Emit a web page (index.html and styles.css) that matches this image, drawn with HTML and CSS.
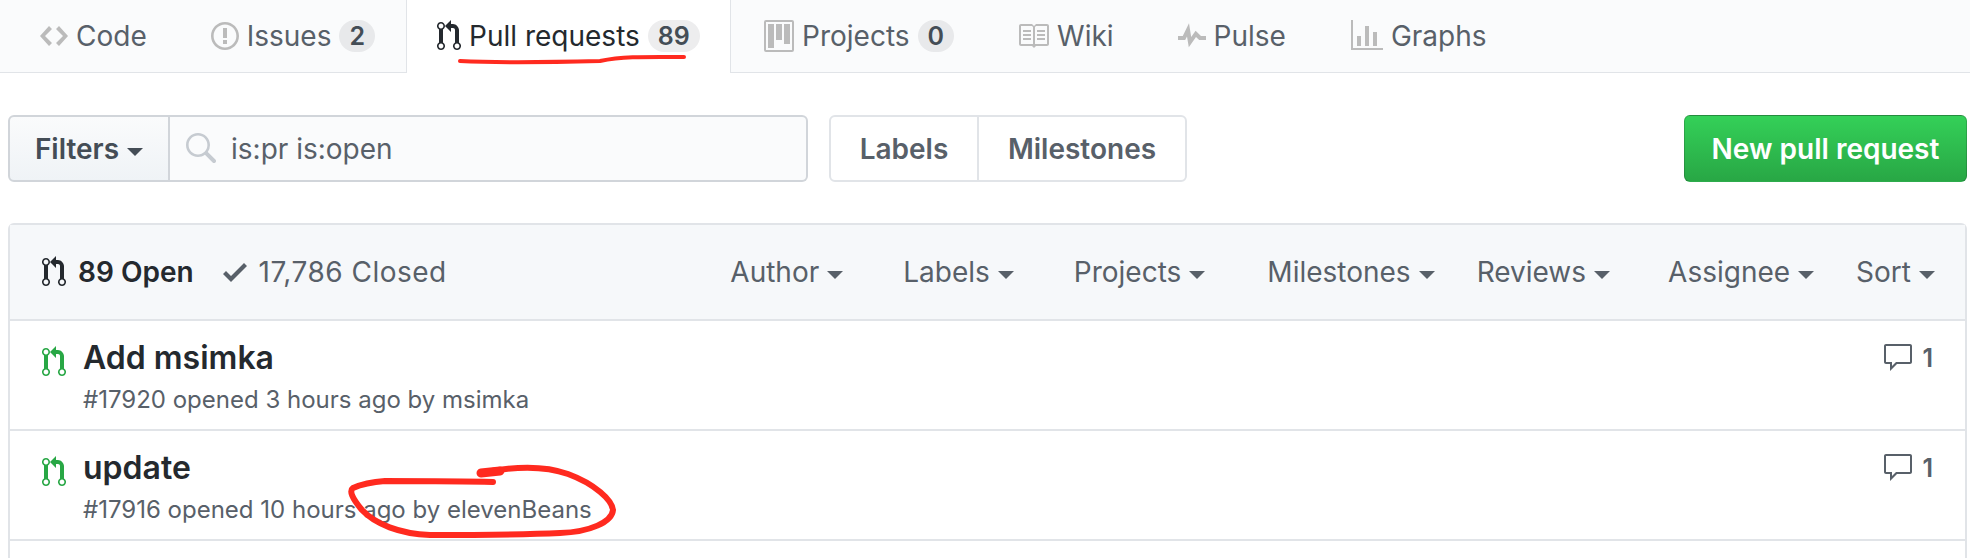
FILE: index.html
```html
<!DOCTYPE html>
<html lang="en">
<head>
    <meta charset="UTF-8">
    <meta name="viewport" content="width=device-width, initial-scale=1.0">
    <title>Pull requests</title>
    <link rel="stylesheet" href="styles.css">
</head>
<body>
    <svg class="icon-defs" width="0" height="0">
        <symbol id="i-code" viewBox="0 0 14 16"><path d="M9.5 3L8 4.5 11.5 8 8 11.5 9.5 13 14 8 9.5 3zm-5 0L0 8l4.5 5L6 11.5 2.5 8 6 4.5 4.5 3z"/></symbol>
        <symbol id="i-issue" viewBox="0 0 14 16"><path d="M7 2.3c3.14 0 5.7 2.56 5.7 5.7s-2.56 5.7-5.7 5.7A5.71 5.71 0 0 1 1.3 8c0-3.14 2.56-5.7 5.7-5.7zM7 1C3.14 1 0 4.14 0 8s3.14 7 7 7 7-3.14 7-7-3.14-7-7-7zm1 3H6v5h2V4zm0 6H6v2h2v-2z"/></symbol>
        <symbol id="i-pr" viewBox="0 0 12 16"><path d="M11 11.28V5c-.03-.78-.34-1.47-.94-2.06C9.46 2.35 8.78 2.03 8 2H7V0L4 3l3 3V4h1c.27.02.48.11.69.31.21.2.3.42.31.69v6.28A1.993 1.993 0 0 0 10 15a1.993 1.993 0 0 0 1-3.72zm-1 2.92c-.66 0-1.2-.55-1.2-1.2 0-.65.55-1.2 1.2-1.2.65 0 1.2.55 1.2 1.2 0 .65-.55 1.2-1.2 1.2zM4 3c0-1.11-.89-2-2-2a1.993 1.993 0 0 0-1 3.72v6.56A1.993 1.993 0 0 0 2 15a1.993 1.993 0 0 0 1-3.72V4.72c.59-.34 1-.98 1-1.72zm-.8 10c0 .66-.55 1.2-1.2 1.2-.65 0-1.2-.55-1.2-1.2 0-.65.55-1.2 1.2-1.2.65 0 1.2.55 1.2 1.2zM2 4.2C1.34 4.2.8 3.65.8 3c0-.65.55-1.2 1.2-1.2.65 0 1.2.55 1.2 1.2 0 .65-.55 1.2-1.2 1.2z"/></symbol>
        <symbol id="i-project" viewBox="0 0 15 16"><path d="M10 12h3V2h-3v10zm-4-2h3V2H6v8zm-4 4h3V2H2v12zm-1 1h13V1H1v14zM14 0H1a1 1 0 0 0-1 1v14a1 1 0 0 0 1 1h13a1 1 0 0 0 1-1V1a1 1 0 0 0-1-1z"/></symbol>
        <symbol id="i-book" viewBox="0 0 16 16"><path d="M3 5h4v1H3V5zm0 3h4V7H3v1zm0 2h4V9H3v1zm11-5h-4v1h4V5zm0 2h-4v1h4V7zm0 2h-4v1h4V9zm2-6v9c0 .55-.45 1-1 1H9.5l-1 1-1-1H2c-.55 0-1-.45-1-1V3c0-.55.45-1 1-1h5.5l1 1 1-1H15c.55 0 1 .45 1 1zm-8 .5L7.5 3H2v9h6V3.5zm7-.5H9.5l-.5.5V12h6V3z"/></symbol>
        <symbol id="i-pulse" viewBox="0 0 14 16"><path d="M11.5 8L8.8 5.4 6.6 8.5 5.5 1.6 2.38 8H0v2h3.6l.9-1.8.9 5.4L9 8.5l1.6 1.5H14V8z"/></symbol>
        <symbol id="i-graph" viewBox="0 0 16 16"><path d="M16 14v1H0V0h1v14h15zM5 13H3V8h2v5zm4 0H7V3h2v10zm4 0h-2V6h2v7z"/></symbol>
        <symbol id="i-check" viewBox="0 0 12 16"><path d="M12 5l-8 8-4-4 1.5-1.5L4 10l6.5-6.5L12 5z"/></symbol>
        <symbol id="i-comment" viewBox="0 0 16 16"><path d="M14 1H2c-.55 0-1 .45-1 1v8c0 .55.45 1 1 1h2v3.5L7.5 11H14c.55 0 1-.45 1-1V2c0-.55-.45-1-1-1zm0 9H7l-2 2v-2H2V2h12v8z"/></symbol>
        <symbol id="i-search" viewBox="0 0 16 16"><path d="M15.7 13.3l-3.81-3.83A5.93 5.93 0 0 0 13 6c0-3.31-2.69-6-6-6S1 2.69 1 6s2.69 6 6 6c1.3 0 2.48-.41 3.47-1.11l3.83 3.81c.19.2.45.3.7.3.25 0 .52-.09.7-.3a.996.996 0 0 0 0-1.41v.01zM7 10.7c-2.59 0-4.7-2.11-4.7-4.7 0-2.59 2.11-4.7 4.7-4.7 2.59 0 4.7 2.11 4.7 4.7 0 2.59-2.11 4.7-4.7 4.7z"/></symbol>
    </svg>

    <!-- Repo tabs -->
    <nav class="tabs">
        <a class="tab tab-code"><svg class="tab-icon w-code"><use href="#i-code"/></svg>Code</a>
        <a class="tab tab-issues"><svg class="tab-icon w-issue"><use href="#i-issue"/></svg>Issues<span class="counter">2</span></a>
        <a class="tab tab-selected"><svg class="tab-icon w-pr"><use href="#i-pr"/></svg>Pull requests<span class="counter">89</span></a>
        <a class="tab tab-projects"><svg class="tab-icon w-project"><use href="#i-project"/></svg>Projects<span class="counter">0</span></a>
        <a class="tab tab-wiki"><svg class="tab-icon w-book"><use href="#i-book"/></svg>Wiki</a>
        <a class="tab tab-pulse"><svg class="tab-icon w-pulse"><use href="#i-pulse"/></svg>Pulse</a>
        <a class="tab tab-graphs"><svg class="tab-icon w-graph"><use href="#i-graph"/></svg>Graphs</a>
    </nav>

    <!-- Filters row -->
    <div class="toolbar">
        <button class="filters-btn">Filters<span class="caret"></span></button>
        <div class="search-box">
            <svg class="search-icon"><use href="#i-search"/></svg>
            <span>is:pr is:open</span>
        </div>
        <div class="link-group">
            <a class="link-labels">Labels</a>
            <a class="link-milestones">Milestones</a>
        </div>
        <button class="new-pr">New pull request</button>
    </div>

    <!-- Issue list -->
    <div class="list">
        <div class="list-header">
            <div class="states">
                <span class="state-open"><svg class="w-pr"><use href="#i-pr"/></svg>89 Open</span>
                <span class="state-closed"><svg class="w-check"><use href="#i-check"/></svg>17,786 Closed</span>
            </div>
            <div class="menus">
                <span class="menu">Author<span class="caret"></span></span>
                <span class="menu m-labels">Labels<span class="caret"></span></span>
                <span class="menu m-projects">Projects<span class="caret"></span></span>
                <span class="menu m-milestones">Milestones<span class="caret"></span></span>
                <span class="menu m-reviews">Reviews<span class="caret"></span></span>
                <span class="menu m-assignee">Assignee<span class="caret"></span></span>
                <span class="menu m-sort">Sort<span class="caret"></span></span>
            </div>
        </div>

        <div class="row">
            <svg class="row-icon w-pr"><use href="#i-pr"/></svg>
            <div class="row-main">
                <div class="row-title">Add msimka</div>
                <div class="row-meta">#17920 opened 3 hours ago by msimka</div>
            </div>
            <div class="row-comments"><svg><use href="#i-comment"/></svg>1</div>
        </div>

        <div class="row">
            <svg class="row-icon w-pr"><use href="#i-pr"/></svg>
            <div class="row-main">
                <div class="row-title">update</div>
                <div class="row-meta">#17916 opened 10 hours ago by elevenBeans</div>
            </div>
            <div class="row-comments"><svg><use href="#i-comment"/></svg>1</div>
        </div>

        <div class="row row-cut"></div>
    </div>

    <!-- Red pen marks on top of the screenshot -->
    <svg class="pen-marks" width="1970" height="558">
        <path class="pen-thin" d="M460 61 C500 63 560 62 600 61 C625 56 650 57 684 57"/>
        <path class="pen-thick" d="M481 473 C505 468 540 464 568 474 C595 484 612 500 613 510 C612 522 590 532 560 533 C520 535 470 535 430 535 C400 534 375 524 362 510 C352 498 349 491 353 488 C362 484 372 482 385 481 C420 481 460 481 493 482"/>
        <path class="pen-blob" d="M481 473 L500 471"/>
    </svg>
</body>
</html>
```

FILE: styles.css
```css
:root {
    --border-color: #e1e4e8;
    --text-color: #24292e;
    --muted-color: #586069;
    --icon-color: #bbb;
    --open-color: #28a745;
    --pen-color: #ff2a1f;
}

body {
    margin: 0;
    height: 558px;
    overflow: hidden;
    font-family: Inter, "Liberation Sans", sans-serif;
    background-color: #fff;
    color: var(--text-color);
}

svg {
    fill: currentColor;
    fill-rule: evenodd;
    flex: none;
}

.icon-defs {
    position: absolute;
}

/* octicons at 2x */
.w-code { width: 28px; height: 32px; }
.w-issue { width: 28px; height: 32px; }
.w-pr { width: 24px; height: 32px; }
.w-project { width: 30px; height: 32px; }
.w-book { width: 32px; height: 32px; }
.w-pulse { width: 28px; height: 32px; }
.w-graph { width: 32px; height: 32px; }
.w-check { width: 24px; height: 32px; }

/* Tabs */
.tabs {
    display: flex;
    height: 72px;
    background-color: #fafbfc;
    border-bottom: 1px solid var(--border-color);
    font-size: 28px;
    color: var(--muted-color);
}

.tab {
    display: flex;
    align-items: center;
    box-sizing: border-box;
    height: 73px;
    padding-bottom: 2px;
}

.tab-icon {
    color: var(--icon-color);
    margin-right: 8px;
}

.tab-code { margin-left: 40px; }
.tab-issues { margin-left: 64px; }
.tab-projects { margin-left: 33px; }
.tab-wiki { margin-left: 63px; }
.tab-pulse { margin-left: 64px; }
.tab-graphs { margin-left: 65px; }

.tab-selected {
    margin-left: 31px;
    width: 325px;
    padding-left: 30px;
    background-color: #fff;
    color: var(--text-color);
    border-left: 1px solid var(--border-color);
    border-right: 1px solid var(--border-color);
}

.tab-selected .tab-icon {
    color: var(--text-color);
}

.counter {
    margin-left: 8px;
    padding: 0 10px;
    height: 32px;
    line-height: 32px;
    border-radius: 16px;
    background-color: rgba(27, 31, 35, 0.08);
    font-size: 25px;
    font-weight: 600;
    color: #444d56;
}

/* Filters row */
.toolbar {
    display: flex;
    align-items: stretch;
    height: 67px;
    margin: 42px 3px 0 8px;
    font-size: 28px;
}

.filters-btn {
    width: 162px;
    padding: 0;
    font: inherit;
    font-weight: 600;
    color: #444d56;
    background: linear-gradient(#fafbfc, #eff3f6);
    border: 2px solid #d1d5da;
    border-radius: 6px 0 0 6px;
}

.search-box {
    display: flex;
    align-items: center;
    width: 638px;
    box-sizing: border-box;
    padding-left: 14px;
    color: #586069;
    background-color: #fafbfc;
    border: 2px solid #d1d5da;
    border-left: none;
    border-radius: 0 6px 6px 0;
}

.search-icon {
    width: 32px;
    height: 32px;
    margin-right: 15px;
    color: #c6cbd1;
}

.link-group {
    display: flex;
    margin-left: 21px;
    border: 2px solid var(--border-color);
    border-radius: 6px;
    font-weight: 600;
    color: #586069;
}

.link-group a {
    display: flex;
    align-items: center;
    justify-content: center;
}

.link-labels {
    width: 146px;
    border-right: 2px solid var(--border-color);
}

.link-milestones {
    width: 206px;
}

.new-pr {
    margin-left: auto;
    width: 283px;
    padding: 0;
    font: inherit;
    font-weight: 600;
    color: #fff;
    background: linear-gradient(#34d058, #28a745);
    border: 1px solid rgba(27, 31, 35, 0.2);
    border-radius: 6px;
}

.caret {
    display: inline-block;
    margin-left: 8px;
    vertical-align: 3px;
    border-top: 8px solid currentColor;
    border-left: 8px solid transparent;
    border-right: 8px solid transparent;
}

/* List */
.list {
    margin: 41px 3px 0 8px;
    border: 2px solid var(--border-color);
    border-bottom: none;
    border-radius: 6px 6px 0 0;
}

.list-header {
    display: flex;
    align-items: center;
    box-sizing: border-box;
    height: 94px;
    background-color: #f6f8fa;
    font-size: 28px;
    color: var(--muted-color);
}

.states {
    display: flex;
    align-items: center;
    padding-left: 32px;
}

.states svg {
    margin-right: 12px;
}

.state-open {
    display: flex;
    align-items: center;
    font-weight: 600;
    color: var(--text-color);
}

.state-closed {
    display: flex;
    align-items: center;
    margin-left: 29px;
    letter-spacing: 0.5px;
}

.menus {
    display: flex;
    margin-left: auto;
    padding-right: 30px;
}

.m-labels { margin-left: 60px; }
.m-projects { margin-left: 60px; }
.m-milestones { margin-left: 62px; }
.m-reviews { margin-left: 42px; }
.m-assignee { margin-left: 58px; }
.m-sort { margin-left: 42px; }

.row {
    display: flex;
    box-sizing: border-box;
    height: 110px;
    padding: 18px 32px 0;
    border-top: 2px solid var(--border-color);
}

.row-cut {
    height: 20px;
}

.row-icon {
    margin-top: 7px;
    color: var(--open-color);
}

.row-main {
    flex: 1;
    margin-left: 17px;
}

.row-title {
    font-size: 32px;
    line-height: 38px;
    font-weight: 600;
}

.row-meta {
    margin-top: 9px;
    font-size: 24px;
    line-height: 28px;
    color: var(--muted-color);
}

.row-comments {
    display: flex;
    align-items: center;
    height: 34px;
    margin-top: 2px;
    font-size: 25px;
    font-weight: 600;
    color: var(--muted-color);
}

.row-comments svg {
    width: 32px;
    height: 32px;
    margin-right: 8px;
}

/* Annotation */
.pen-marks {
    position: absolute;
    top: 0;
    left: 0;
    pointer-events: none;
}

.pen-marks path {
    fill: none;
    stroke: var(--pen-color);
    stroke-linecap: round;
    stroke-linejoin: round;
}

.pen-thin { stroke-width: 4px; }
.pen-thick { stroke-width: 6px; }
.pen-blob { stroke-width: 9px; }
```
